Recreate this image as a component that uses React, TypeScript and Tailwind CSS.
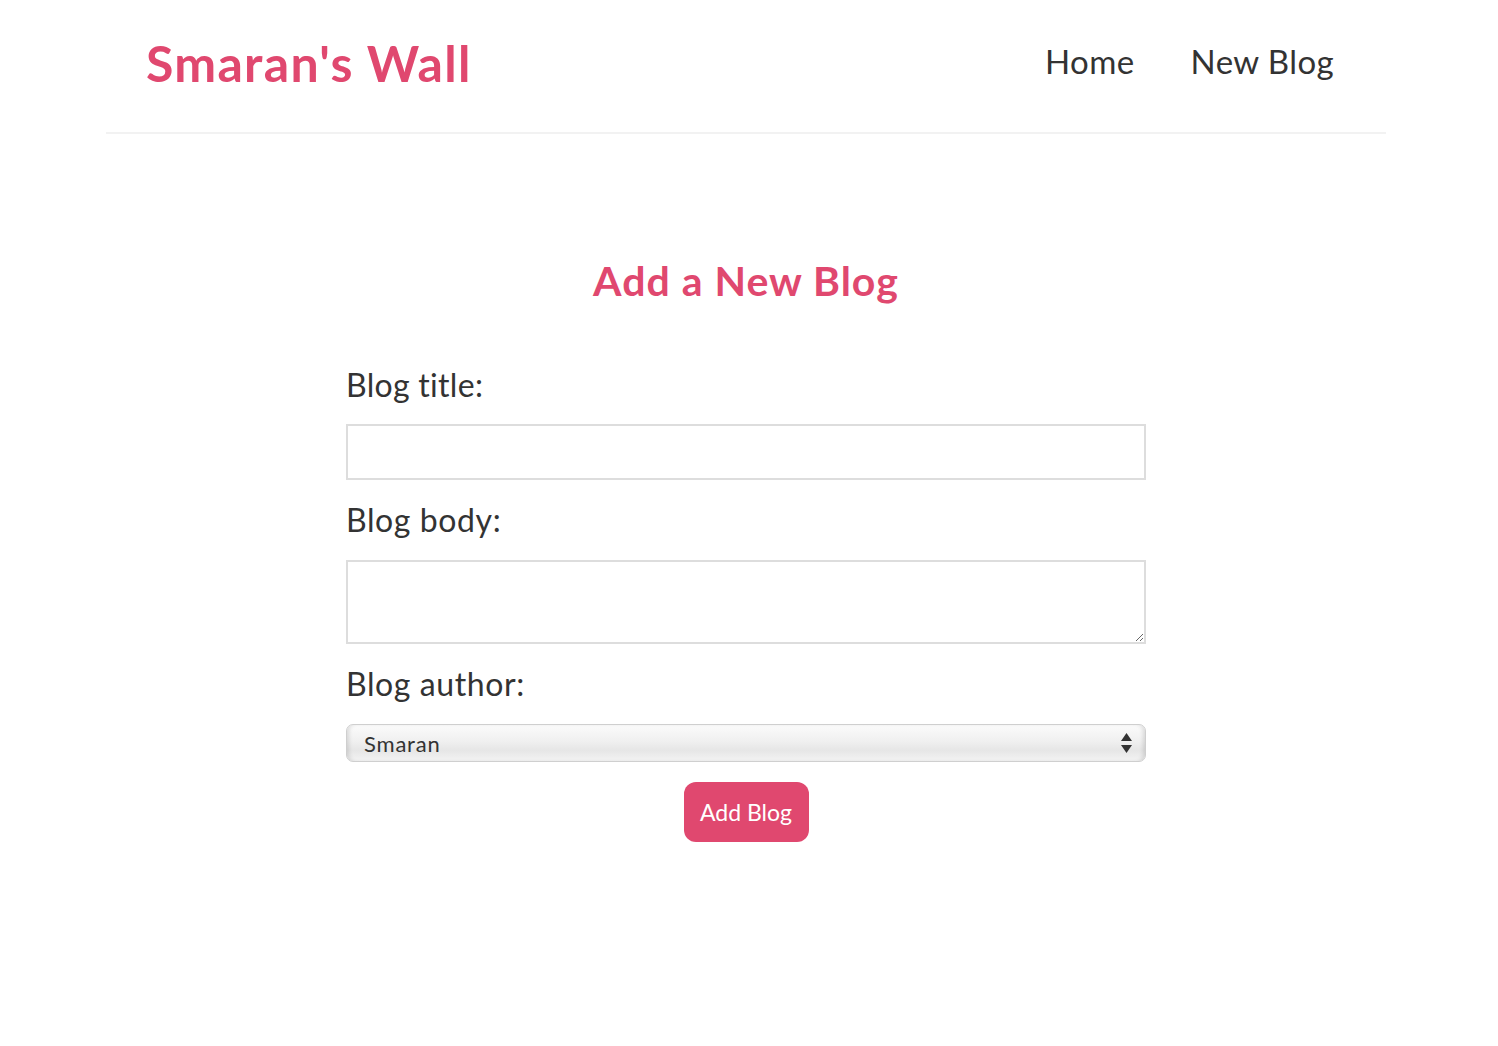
import React from "react";

export default function App() {
  const font = { fontFamily: "Lato, 'Noto Sans', sans-serif" };
  return (
    <div className="w-[1492px] min-h-[1046px] bg-white text-[#333]" style={font}>
      <nav className="w-[1280px] mx-auto h-[134px] flex items-center justify-between px-[40px] border-b-2 border-[#f2f2f2]">
        <h1 className="text-[50px] font-bold text-[#e0486f] leading-none tracking-[1.3px] -mt-[6px]">Smaran's Wall</h1>
        <div className="flex items-center gap-[56px] pr-[12px] -mt-[9px]">
          <a className="text-[33px] text-[#333] leading-none tracking-[0.4px]">Home</a>
          <a className="text-[33px] text-[#333] leading-none tracking-[0.4px]">New Blog</a>
        </div>
      </nav>
      <div className="w-[800px] mx-auto flex flex-col">
        <h2 className="text-center text-[41px] font-bold text-[#e0486f] leading-none tracking-[1px] mt-[126px]">Add a New Blog</h2>
        <label className="text-[32px] leading-none tracking-[0.3px] mt-[68px]">Blog title:</label>
        <input className="mt-[23px] h-[56px] w-full border-2 border-[#ddd] outline-none px-3 text-[20px]" type="text" />
        <label className="text-[32px] leading-none tracking-[0.6px] mt-[24px]">Blog body:</label>
        <textarea className="mt-[24px] h-[84px] w-full border-2 border-[#ddd] outline-none px-3 text-[20px] block" />
        <label className="text-[32px] leading-none tracking-[0.6px] mt-[24px]">Blog author:</label>
        <div className="relative mt-[24px]">
          <select
            className="appearance-none w-full h-[38px] rounded-[7px] border border-[#cfcfcf] pl-[17px] text-[22px] tracking-[0.8px] text-[#333] outline-none bg-[linear-gradient(#fbfbfb,#f0f0f0_45%,#e6e6e6_70%,#f3f3f3)] shadow-[inset_4px_0_4px_-2px_rgba(0,0,0,0.12),inset_-4px_0_4px_-2px_rgba(0,0,0,0.12)]"
            style={font}
            defaultValue="Smaran"
          >
            <option>Smaran</option>
            <option>Yoshi</option>
          </select>
          <svg className="absolute right-[14px] top-[9px] pointer-events-none" width="11" height="20" viewBox="0 0 11 20">
            <path d="M5.5 0 L11 8 L0 8 Z" fill="#333" />
            <path d="M0 12 L11 12 L5.5 20 Z" fill="#333" />
          </svg>
        </div>
        <button className="self-center mt-[20px] w-[125px] h-[60px] rounded-[12px] bg-[#e0486f] text-white text-[23px]">Add Blog</button>
      </div>
    </div>
  );
}
